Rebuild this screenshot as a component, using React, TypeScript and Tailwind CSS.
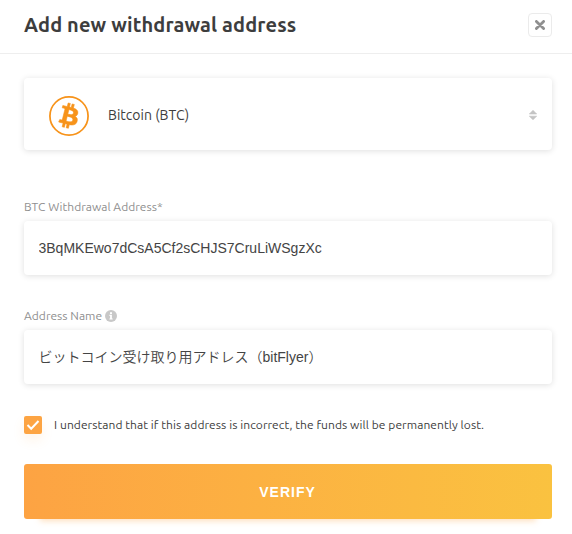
import React, { useState } from "react";

const CARD = "w-full bg-white rounded-[4px] shadow-[0_1px_6px_rgba(0,0,0,0.13)]";
const INPUT = `${CARD} block h-[54px] pr-[15px] pl-[14.5px] text-[14px] text-[#444444] outline-none`;

const BitcoinIcon = () => (
  <svg viewBox="0 0 24 24" className="w-10 h-10" fill="#f7931a">
    <circle cx="12" cy="12" r="11.45" fill="none" stroke="#f7931a" strokeWidth="1.05" />
    <path
      stroke="#f7931a"
      strokeWidth="0.35"
      d="M17.288 10.291c.24-1.59-.974-2.45-2.64-3.03l.54-2.153-1.315-.33-.525 2.107c-.345-.087-.705-.167-1.064-.25l.526-2.127-1.32-.33-.54 2.165c-.285-.067-.565-.132-.84-.2l-1.815-.45-.35 1.407s.975.225.955.236c.535.136.63.486.615.766l-1.477 5.92c-.075.166-.24.406-.614.314.015.02-.96-.24-.96-.24l-.66 1.51 1.71.426.93.242-.54 2.19 1.32.327.54-2.17c.36.1.705.19 1.05.273l-.51 2.154 1.32.33.545-2.19c2.24.427 3.93.257 4.64-1.774.57-1.637-.03-2.58-1.217-3.196.854-.193 1.5-.76 1.68-1.93h.01zm-3.01 4.22c-.404 1.64-3.157.75-4.05.53l.72-2.9c.896.23 3.757.67 3.33 2.37zm.41-4.24c-.37 1.49-2.662.735-3.405.55l.654-2.64c.744.18 3.137.524 2.75 2.084v.006z"
    />
  </svg>
);

const InfoIcon = () => (
  <svg viewBox="0 0 12 12" className="w-3 h-3">
    <circle cx="6" cy="6" r="6" fill="#c8c8c8" />
    <path d="M5 2.3h2v1.6H5zM4.4 4.8h2.5v3.6h.8v1.1H4.4V8.4h.7V5.9h-.7z" fill="#fff" />
  </svg>
);

export default function App() {
  const [address, setAddress] = useState("3BqMKEwo7dCsA5Cf2sCHJS7CruLiWSgzXc");
  const [name, setName] = useState("ビットコイン受け取り用アドレス（bitFlyer）");
  const [agreed, setAgreed] = useState(true);

  return (
    <div className="w-full h-[534px] bg-white overflow-hidden font-['Ubuntu','Noto_Sans',sans-serif] text-[#3d3d3d]">
      <header className="h-[54px] pl-6 pr-5 flex items-center justify-between border-b border-[#eeeeee]">
        <h1 className="text-[20px] leading-6 font-bold tracking-[0.13px] whitespace-nowrap pb-1">
          Add new withdrawal address
        </h1>
        <button
          aria-label="Close"
          className="w-6 h-6 mb-[3px] flex items-center justify-center border border-[#ebebeb] rounded-[4px]"
        >
          <svg viewBox="0 0 10 10" className="w-[10px] h-[10px]" stroke="#8f8f8f" strokeWidth="2.8" strokeLinecap="round">
            <path d="M1.4 1.4l7.2 7.2M8.6 1.4L1.4 8.6" />
          </svg>
        </button>
      </header>

      <main className="pl-6 pr-5 pt-6">
        <button className={`${CARD} h-[72px] pl-[25px] pr-[15px] pt-[3px] flex items-center text-left`}>
          <BitcoinIcon />
          <span className="ml-[19px] mb-0.5 text-[14px] leading-5 flex-1 tracking-[0.02px]">Bitcoin (BTC)</span>
          <svg viewBox="0 0 8 10" className="w-2 h-[10px] mb-0.5" fill="#c4c4c4" stroke="#c4c4c4" strokeWidth="0.6" strokeLinejoin="round">
            <path d="M4 .3L7.7 4H.3zM.3 6.2h7.4L4 9.8z" />
          </svg>
        </button>

        <label className="block mt-12">
          <span className="flex items-center h-[18px] mb-[5px] text-[12px] tracking-[0.02px] text-[#8f8f8f]">
            BTC Withdrawal Address*
          </span>
          <input
            value={address}
            onChange={(e) => setAddress(e.target.value)}
            className={`${INPUT} font-['Liberation_Sans',sans-serif]`}
          />
        </label>

        <label className="block mt-8">
          <span className="flex items-center gap-[3px] h-[18px] mb-[5px] text-[12px] tracking-[0.02px] text-[#8f8f8f]">
            Address Name <InfoIcon />
          </span>
          <input
            value={name}
            onChange={(e) => setName(e.target.value)}
            className={`${INPUT} pb-0.5 font-[350] text-[#333333] font-['Liberation_Sans','Noto_Sans_CJK_JP',sans-serif]`}
          />
        </label>

        <div
          className="mt-8 h-[18px] flex items-center cursor-pointer"
          onClick={() => setAgreed(!agreed)}
        >
          <span className="w-[18px] h-[18px] flex items-center justify-center bg-[#fda443] rounded-[2px] shadow-[0_6px_12px_rgba(253,164,67,0.12)]">
            {agreed && (
              <svg viewBox="0 0 14 12" className="w-[14px] h-3" fill="none" stroke="#fff" strokeWidth="2">
                <path d="M1.5 6l3.7 3.7L12.5 2" />
              </svg>
            )}
          </span>
          <span className="ml-3 text-[12px] tracking-[0.07px] whitespace-nowrap">
            I understand that if this address is incorrect, the funds will be permanently lost.
          </span>
        </div>

        <button className="mt-[30px] w-full h-[55px] pt-0.5 pr-px rounded-[3px] bg-linear-to-r from-[#fda343] to-[#fac240] shadow-[0_18px_6px_-16px_rgba(253,164,67,0.35)] text-white text-[14px] font-bold tracking-[1px] font-['Liberation_Sans',sans-serif]">
          VERIFY
        </button>
      </main>
    </div>
  );
}
